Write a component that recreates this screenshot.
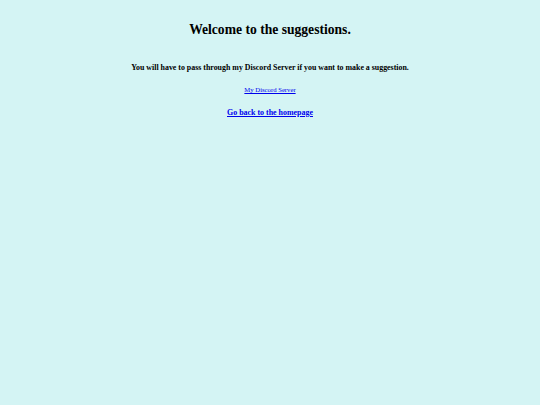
export default function App() {
  return (
    <div className="min-h-[405px] bg-[#d4f4f4] text-center text-black font-['Liberation_Serif',serif]">
      <h1 className="pt-[21px] text-[13.6px] leading-[18px] font-bold">Welcome to the suggestions.</h1>
      <p className="mt-[24px] text-[7.9px] leading-[10px] font-bold">
        You will have to pass through my Discord Server if you want to make a suggestion.
      </p>
      <p className="mt-[12px] text-[6.7px] leading-[9px]">
        <a href="#" className="text-[#0000ee] underline">My Discord Server</a>
      </p>
      <p className="mt-[14px] text-[7.95px] leading-[10px] font-bold">
        <a href="#" className="text-[#0000ee] underline">Go back to the homepage</a>
      </p>
    </div>
  );
}
